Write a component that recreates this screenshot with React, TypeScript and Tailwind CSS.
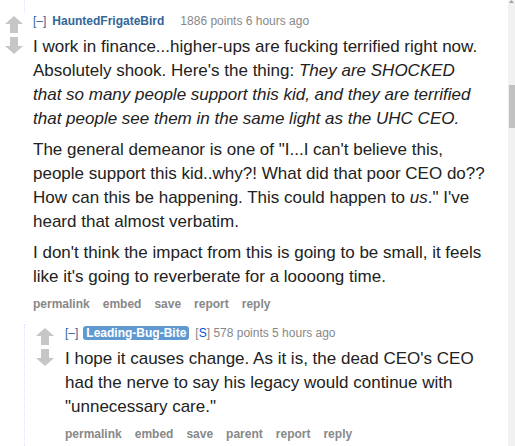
import React from 'react';

const font = { fontFamily: '"Liberation Sans", Arial, sans-serif' };

const UpArrow = () => (
  <svg width="18" height="17" viewBox="0 0 18 17" className="block">
    <polygon points="9,0 18,8 13,8 13,17 5,17 5,8 0,8" fill="#c6c6c6" />
  </svg>
);

const DownArrow = () => (
  <svg width="18" height="17" viewBox="0 0 18 17" className="block">
    <polygon points="5,0 13,0 13,9 18,9 9,17 0,9 5,9" fill="#c6c6c6" />
  </svg>
);

const Votes = () => (
  <div className="flex w-[18px] shrink-0 flex-col gap-[4px] pt-[3px]">
    <UpArrow />
    <DownArrow />
  </div>
);

const Actions = ({ items }: { items: string[] }) => (
  <ul className="mt-[7px] flex gap-[13px] text-[12px] font-bold leading-4 text-[#888]">
    {items.map((item) => (
      <li key={item}>{item}</li>
    ))}
  </ul>
);

const App: React.FC = () => {
  return (
    <div className="flex h-[446px] w-[515px] overflow-hidden bg-white" style={font}>
      <main className="flex-1 pr-[22px]">
        <div className="ml-[24px] h-[13px] border-l border-dotted border-[#ddf]" />

        <div className="flex gap-[10px] pl-[5px]">
          <Votes />
          <div className="flex-1">
            <p className="text-[12px] leading-4 text-[#888]">
              <span className="text-[#369]">[–]</span>
              <span className="ml-[6px] font-bold text-[#369]">HauntedFrigateBird</span>
              <span className="ml-[16px]">1886 points 6 hours ago</span>
            </p>
            <div className="mt-[6px] text-[17px] leading-6 text-[#222]">
              <p className="mb-[7px]">
                I work in finance...higher-ups are fucking terrified right now. Absolutely shook. Here's the
                thing:{' '}
                <em>
                  They are SHOCKED that so many people support this kid, and they are terrified that people see
                  them in the same light as the UHC CEO.
                </em>
              </p>
              <p className="mb-[7px]">
                The general demeanor is one of "I...I can't believe this, people support this kid..why?! What did
                that poor CEO do?? How can this be happening. This could happen to <em>us</em>." I've heard that
                almost verbatim.
              </p>
              <p>
                I don't think the impact from this is going to be small, it feels like it's going to reverberate
                for a loooong time.
              </p>
            </div>
            <Actions items={['permalink', 'embed', 'save', 'report', 'reply']} />
          </div>
        </div>

        <div className="ml-[24px] mt-[12px] border-l border-dotted border-[#ddf] pb-4 pl-[11px] pt-[1px]">
          <div className="flex gap-[11px]">
            <Votes />
            <div className="flex-1">
              <p className="text-[12px] leading-4 text-[#888]">
                <span className="text-[#369]">[–]</span>
                <span className="ml-[5px] rounded-[3px] bg-[#5f99cf] px-[3px] font-bold text-white">
                  Leading-Bug-Bite
                </span>
                <span className="ml-[6px]">
                  [<span className="text-[#0055df]">S</span>]
                </span>{' '}
                578 points 5 hours ago
              </p>
              <div className="mt-[6px] text-[17px] leading-6 text-[#222]">
                <p>
                  I hope it causes change. As it is, the dead CEO's CEO had the nerve to say his legacy would
                  continue with "unnecessary care."
                </p>
              </div>
              <Actions items={['permalink', 'embed', 'save', 'parent', 'report', 'reply']} />
            </div>
          </div>
        </div>
      </main>

      <aside className="flex w-[7px] shrink-0 flex-col bg-[#f1f1f1]">
        <svg width="7" height="3" viewBox="0 0 7 3" className="block">
          <polygon points="1,3 3.5,0 6,3" fill="#a3a3a3" />
        </svg>
        <div className="ml-px mt-[82px] h-[43px] bg-[#c1c1c1]" />
      </aside>
    </div>
  );
};

export default App;
